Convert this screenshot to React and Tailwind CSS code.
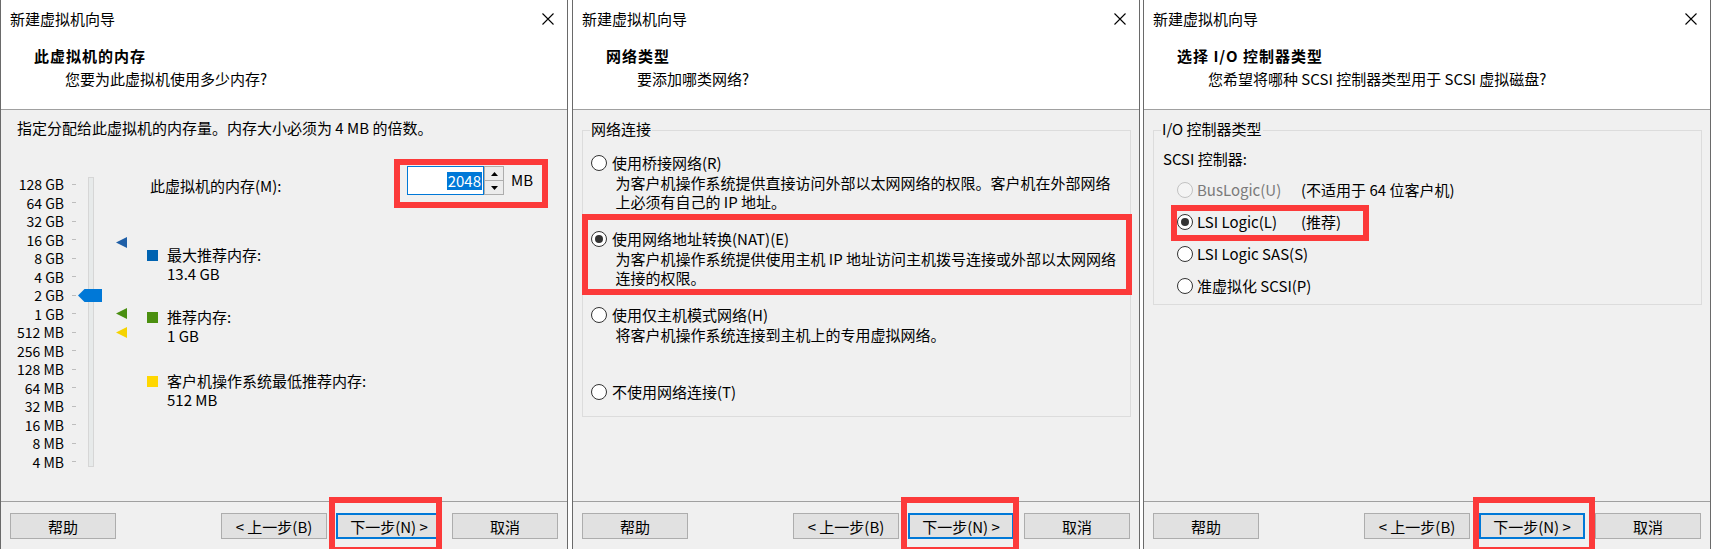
import React from "react";

const RED = "border-[#fc3a3a]";

function CloseX() {
  return (
    <svg width="12" height="12" viewBox="0 0 12 12" className="shrink-0">
      <path d="M0.5 0.5L11.5 11.5M11.5 0.5L0.5 11.5" stroke="#000" strokeWidth="1.1" fill="none" />
    </svg>
  );
}

function Radio({ checked, disabled }) {
  return (
    <span
      className={`w-[16px] h-[16px] rounded-full border shrink-0 flex items-center justify-center ${
        disabled ? "border-[#c2c2c2] bg-[#f4f4f4]" : "border-[#333333] bg-white"
      }`}
    >
      {checked && <span className="w-[8px] h-[8px] rounded-full bg-[#333333]" />}
    </span>
  );
}

function Btn({ children, focused }) {
  return (
    <div
      className={`w-[106px] h-[26px] shrink-0 flex items-center justify-center bg-[#e1e1e1] text-[15px] leading-none ${
        focused ? "border-2 border-[#0078d7]" : "border border-[#adadad]"
      }`}
    >
      {children}
    </div>
  );
}

function Win({ title, sub, children, className = "", overlays }) {
  return (
    <div
      className={`relative w-[568px] h-[549px] shrink-0 flex flex-col bg-[#f0f0f0] border-x border-[#6a6a6a] ${className}`}
    >
      <div className="h-[38px] bg-white flex items-center justify-between pl-[9px] pr-[13px]">
        <span className="leading-[20px]">新建虚拟机向导</span>
        <CloseX />
      </div>
      <div className="h-[71px] bg-white pl-[33px] pt-[8px]">
        <div className="font-bold tracking-[1px] leading-[20px]">{title}</div>
        <div className="mt-[3px] pl-[31px] leading-[20px]">{sub}</div>
      </div>
      <div className="h-px bg-[#a0a0a0]" />
      <div className="h-[391px]">{children}</div>
      <div className="h-px bg-[#a0a0a0]" />
      <div className="h-[47px] flex pt-[11px] pl-[9px]">
        <Btn>帮助</Btn>
        <div className="ml-[105px]">
          <Btn>{"< 上一步(B)"}</Btn>
        </div>
        <div className="ml-[9px]">
          <Btn focused>{"下一步(N) >"}</Btn>
        </div>
        <div className="ml-[10px]">
          <Btn>取消</Btn>
        </div>
      </div>
      {overlays}
    </div>
  );
}

const LABELS = [
  "128 GB",
  "64 GB",
  "32 GB",
  "16 GB",
  "8 GB",
  "4 GB",
  "2 GB",
  "1 GB",
  "512 MB",
  "256 MB",
  "128 MB",
  "64 MB",
  "32 MB",
  "16 MB",
  "8 MB",
  "4 MB",
];

function Tri({ color, top }) {
  return (
    <svg
      width="11"
      height="11"
      viewBox="0 0 11 11"
      className="absolute left-[115px]"
      style={{ top }}
    >
      <polygon points="0,5.5 11,0 11,11" fill={color} />
    </svg>
  );
}

function MemoryBody() {
  return (
    <div>
      <div className="pl-[16px] pt-[8px] leading-[20px] whitespace-nowrap">
        指定分配给此虚拟机的内存量。内存大小必须为 4 MB 的倍数。
      </div>
      <div className="flex">
        <div className="relative w-[146px] h-[340px] shrink-0">
          <div className="absolute left-0 top-[36.75px] flex flex-col">
            {LABELS.map((l) => (
              <div key={l} className="h-[18.53px] flex items-center">
                <span className="w-[63px] text-right text-[14px] leading-none whitespace-nowrap">{l}</span>
                <span className="ml-[8px] w-[4px] h-px bg-[#bdbdbd]" />
              </div>
            ))}
          </div>
          <div className="absolute left-[87px] top-[39px] w-[6px] h-[290px] bg-[#e7eaea] border border-[#d6d6d6]" />
          <svg width="24" height="13" viewBox="0 0 24 13" className="absolute left-[77px] top-[150.5px]">
            <polygon points="0,6.5 6.5,0 24,0 24,13 6.5,13" fill="#0078d7" />
          </svg>
          <Tri color="#1f5fa7" top={98.5} />
          <Tri color="#4a8f12" top={169.5} />
          <Tri color="#f5d300" top={188.5} />
        </div>
        <div className="flex-1 flex flex-col">
          <div className="mt-[21px] h-[49px] flex justify-between pr-[19px]">
            <span className="mt-[17px] pl-[3px] leading-[20px] whitespace-nowrap">此虚拟机的内存(M):</span>
            <div className={`w-[154px] h-[49px] border-[6px] ${RED} pl-[7px] pt-[1px] flex items-start`}>
              <div className="w-[77px] h-[29px] bg-white border border-[#0078d7] flex items-center justify-end pr-[1px]">
                <span className="bg-[#0078d7] text-white leading-[18px] px-px">2048</span>
              </div>
              <div className="w-[20px] h-[29px] flex flex-col">
                <div className="h-[15px] bg-[#ececec] border border-[#adadad] flex items-center justify-center">
                  <svg width="7" height="4" viewBox="0 0 7 4">
                    <polygon points="0,4 3.5,0 7,4" fill="#000" />
                  </svg>
                </div>
                <div className="h-[14px] bg-[#ececec] border border-t-0 border-[#adadad] flex items-center justify-center">
                  <svg width="7" height="4" viewBox="0 0 7 4">
                    <polygon points="0,0 3.5,4 7,0" fill="#000" />
                  </svg>
                </div>
              </div>
              <span className="ml-[7px] mt-[4px] leading-[20px]">MB</span>
            </div>
          </div>
          <div className="mt-[37px] flex leading-[19px]">
            <span className="w-[11px] h-[11px] mt-[4.5px] bg-[#0063b1] shrink-0" />
            <div className="ml-[9px]">
              <div>最大推荐内存:</div>
              <div>13.4 GB</div>
            </div>
          </div>
          <div className="mt-[24px] flex leading-[19px]">
            <span className="w-[11px] h-[11px] mt-[4.5px] bg-[#4b8f0f] shrink-0" />
            <div className="ml-[9px]">
              <div>推荐内存:</div>
              <div>1 GB</div>
            </div>
          </div>
          <div className="mt-[26px] flex leading-[19px]">
            <span className="w-[11px] h-[11px] mt-[4.5px] bg-[#ffd700] shrink-0" />
            <div className="ml-[9px]">
              <div>客户机操作系统最低推荐内存:</div>
              <div>512 MB</div>
            </div>
          </div>
        </div>
      </div>
    </div>
  );
}

function RadioRow({ checked, disabled, children }) {
  return (
    <div className="h-[20px] flex items-center">
      <Radio checked={checked} disabled={disabled} />
      <span className={`ml-[5px] leading-[20px] whitespace-nowrap ${disabled ? "text-[#7a7a7a]" : ""}`}>
        {children}
      </span>
    </div>
  );
}

function NetworkBody() {
  return (
    <div className="pt-[20px]">
      <div className="relative ml-[9px] w-[549px] h-[287px] border border-[#dcdcdc]">
        <span className="absolute left-[7px] -top-[12px] px-[1px] bg-[#f0f0f0] leading-[20px] whitespace-nowrap">
          网络连接
        </span>
        <div className="pt-[22px] pl-[8px] flex flex-col">
          <RadioRow>使用桥接网络(R)</RadioRow>
          <div className="pl-[24.5px] leading-[19px] whitespace-nowrap">
            <div>为客户机操作系统提供直接访问外部以太网网络的权限。客户机在外部网络</div>
            <div>上必须有自己的 IP 地址。</div>
          </div>
          <div className="mt-[18px]">
            <RadioRow checked>使用网络地址转换(NAT)(E)</RadioRow>
          </div>
          <div className="pl-[24.5px] leading-[19px] whitespace-nowrap">
            <div>为客户机操作系统提供使用主机 IP 地址访问主机拨号连接或外部以太网网络</div>
            <div>连接的权限。</div>
          </div>
          <div className="mt-[18px]">
            <RadioRow>使用仅主机模式网络(H)</RadioRow>
          </div>
          <div className="pl-[24.5px] leading-[19px] whitespace-nowrap">
            <div>将客户机操作系统连接到主机上的专用虚拟网络。</div>
          </div>
          <div className="mt-[38px]">
            <RadioRow>不使用网络连接(T)</RadioRow>
          </div>
        </div>
      </div>
    </div>
  );
}

function IoRow({ checked, disabled, label, note }) {
  return (
    <div className="h-[32px] flex items-center">
      <Radio checked={checked} disabled={disabled} />
      <span
        className={`ml-[4px] w-[104px] leading-[20px] whitespace-nowrap ${disabled ? "text-[#7a7a7a]" : ""}`}
      >
        {label}
      </span>
      {note && <span className="leading-[20px] whitespace-nowrap">{note}</span>}
    </div>
  );
}

function IoBody() {
  return (
    <div className="pt-[20px]">
      <div className="relative ml-[9px] w-[549px] h-[175px] border border-[#dcdcdc]">
        <span className="absolute left-[7px] -top-[12px] px-[1px] bg-[#f0f0f0] leading-[20px] whitespace-nowrap">
          I/O 控制器类型
        </span>
        <div className="pt-[18px] pl-[9px] leading-[20px] whitespace-nowrap">SCSI 控制器:</div>
        <div className="mt-[4.5px] pl-[23px] flex flex-col">
          <IoRow disabled label="BusLogic(U)" note="(不适用于 64 位客户机)" />
          <IoRow checked label="LSI Logic(L)" note="(推荐)" />
          <IoRow label="LSI Logic SAS(S)" />
          <IoRow label="准虚拟化 SCSI(P)" />
        </div>
      </div>
    </div>
  );
}

export default function App() {
  return (
    <div className="w-[1715px] h-[549px] overflow-hidden bg-white flex font-['Noto_Sans_CJK_SC',sans-serif] text-[15px] text-black">
      <Win
        title="此虚拟机的内存"
        sub="您要为此虚拟机使用多少内存?"
        overlays={
          <div className={`absolute left-[328px] top-[497px] w-[113px] h-[56px] border-[6px] ${RED}`} />
        }
      >
        <MemoryBody />
      </Win>
      <Win
        className="ml-[4px]"
        title="网络类型"
        sub="要添加哪类网络?"
        overlays={
          <>
            <div className={`absolute left-[9px] top-[214px] w-[550px] h-[81px] border-[6px] ${RED}`} />
            <div className={`absolute left-[328px] top-[497px] w-[118px] h-[56px] border-[6px] ${RED}`} />
          </>
        }
      >
        <NetworkBody />
      </Win>
      <Win
        className="ml-[3px]"
        title="选择 I/O 控制器类型"
        sub="您希望将哪种 SCSI 控制器类型用于 SCSI 虚拟磁盘?"
        overlays={
          <>
            <div className={`absolute left-[27px] top-[205px] w-[198px] h-[36px] border-[6px] ${RED}`} />
            <div className={`absolute left-[329px] top-[497px] w-[122px] h-[56px] border-[6px] ${RED}`} />
          </>
        }
      >
        <IoBody />
      </Win>
    </div>
  );
}
